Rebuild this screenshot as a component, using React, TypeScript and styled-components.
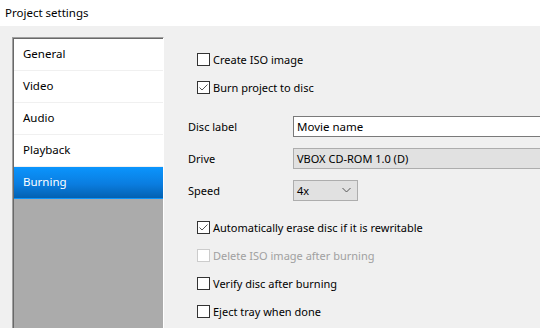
import React from "react";
import styled, { createGlobalStyle } from "styled-components";

const Global = createGlobalStyle`
  html, body { margin: 0; padding: 0; }
  body {
    width: 540px; height: 328px; overflow: hidden;
    background: #f0f0f0;
    font-family: "Noto Sans", "Open Sans", sans-serif;
    font-size: 11px; color: #000;
  }
`;

const Window = styled.div`
  width: 540px; height: 328px; display: flex; flex-direction: column; overflow: hidden;
`;

const TitleBar = styled.div`
  height: 26px; background: #fff; display: flex; align-items: center; flex: none;
  padding-left: 5px; padding-bottom: 2px; box-sizing: border-box; font-size: 11.5px;
`;

const Body = styled.div`
  flex: 1; display: flex; padding: 11px 0 0 12px; min-height: 0;
`;

const Sidebar = styled.div`
  width: 152px; flex: none; box-sizing: border-box; background: #ababab;
  border-top: 1px solid #a0a0a0; border-left: 1px solid #a0a0a0;
  box-shadow: inset 1px 1px 0 #696969;
  border-right: 1px solid #fff;
  padding: 1px 0 0 1px;
  display: flex; flex-direction: column;
`;

const Item = styled.div<{ $active?: boolean }>`
  height: 32px; box-sizing: border-box; display: flex; align-items: center; flex: none;
  padding-left: 9px; padding-bottom: 2px; font-size: 11.5px;
  background: ${(p) => (p.$active ? "linear-gradient(#0b95fd, #0a7de0 55%, #0461b1)" : "#fff")};
  color: ${(p) => (p.$active ? "#fff" : "#000")};
  border-bottom: 1px solid ${(p) => (p.$active ? "transparent" : "#f0f0f0")};
`;

const Content = styled.div`
  flex: 1; min-width: 0; display: flex; flex-direction: column; padding: 8px 0 0 24px;
`;

const CheckRow = styled.label<{ $disabled?: boolean }>`
  height: 28px; display: flex; align-items: center; padding-left: 9px;
  color: ${(p) => (p.$disabled ? "#a0a0a0" : "#000")};
`;

const Box = styled.span<{ $disabled?: boolean }>`
  width: 13px; height: 13px; box-sizing: border-box; background: #fff; flex: none;
  border: 1px solid ${(p) => (p.$disabled ? "#cccccc" : "#333")};
  margin-right: 3px; display: flex; align-items: center; justify-content: center;
`;

const FormRows = styled.div`
  margin-top: 9px; margin-bottom: 7px; display: flex; flex-direction: column;
`;

const FormRow = styled.div`
  height: 32px; display: flex; align-items: center;
`;

const Label = styled.span`
  width: 105px; flex: none;
`;

const TextInput = styled.div`
  width: 300px; height: 21px; box-sizing: border-box; flex: none;
  border: 1px solid #7a7a7a; background: #fff; font-size: 11.5px;
  display: flex; align-items: center; padding-left: 3px;
`;

const Combo = styled.div<{ $w: number }>`
  width: ${(p) => p.$w}px; height: 21px; box-sizing: border-box; flex: none;
  border: 1px solid #adadad; background: #e1e1e1;
  display: flex; align-items: center; justify-content: space-between;
  padding: 0 6px 0 3px;
`;

const Check = () => (
  <svg width="11" height="11" viewBox="0 0 11 11">
    <polyline points="1.5,5.5 4,8 9.5,2.5" fill="none" stroke="#555" strokeWidth="1" />
  </svg>
);

const Chevron = () => (
  <svg width="9" height="6" viewBox="0 0 9 6">
    <polyline points="0.5,1 4.5,5 8.5,1" fill="none" stroke="#555" strokeWidth="1" />
  </svg>
);

const CheckBox = ({ label, checked, disabled }: { label: string; checked?: boolean; disabled?: boolean }) => (
  <CheckRow $disabled={disabled}>
    <Box $disabled={disabled}>{checked && <Check />}</Box>
    {label}
  </CheckRow>
);

export default function App() {
  const items = ["General", "Video", "Audio", "Playback", "Burning"];
  return (
    <Window>
      <Global />
      <TitleBar>Project settings</TitleBar>
      <Body>
        <Sidebar>
          {items.map((i) => (
            <Item key={i} $active={i === "Burning"}>{i}</Item>
          ))}
        </Sidebar>
        <Content>
          <CheckBox label="Create ISO image" />
          <CheckBox label="Burn project to disc" checked />
          <FormRows>
            <FormRow>
              <Label>Disc label</Label>
              <TextInput>Movie name</TextInput>
            </FormRow>
            <FormRow>
              <Label>Drive</Label>
              <Combo $w={300}>VBOX CD-ROM 1.0 (D)</Combo>
            </FormRow>
            <FormRow>
              <Label>Speed</Label>
              <Combo $w={65}>4x<Chevron /></Combo>
            </FormRow>
          </FormRows>
          <CheckBox label="Automatically erase disc if it is rewritable" checked />
          <CheckBox label="Delete ISO image after burning" disabled />
          <CheckBox label="Verify disc after burning" />
          <CheckBox label="Eject tray when done" />
        </Content>
      </Body>
    </Window>
  );
}
